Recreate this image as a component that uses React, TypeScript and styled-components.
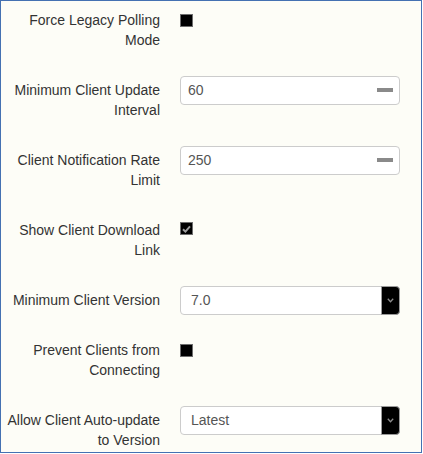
import { createGlobalStyle, styled } from "styled-components";

const GlobalStyle = createGlobalStyle`
    html, body {
        margin: 0;
        padding: 0;
        background: #ffffff;
    }
    body {
        font-family: "Liberation Sans", Arial, sans-serif;
    }
`;

const Frame = styled.div`
    box-sizing: border-box;
    width: 422px;
    height: 453px;
    border: 1px solid #4471b2;
    background: #fdfdf7;
    padding: 9px 0 2px 4px;
    display: flex;
    flex-direction: column;
    gap: 30px;
    overflow: hidden;
`;

const Row = styled.div`
    display: flex;
    align-items: flex-start;
    gap: 20px;
`;

const Label = styled.label`
    width: 155px;
    flex-shrink: 0;
    text-align: right;
    font-size: 14px;
    line-height: 20px;
    color: #333333;
`;

const Control = styled.div`
    height: 20px;
    display: flex;
    align-items: center;
`;

const Check = styled.span<{ $checked?: boolean }>`
    box-sizing: border-box;
    width: 13px;
    height: 13px;
    background: #000000;
    border: 1px solid #6e6e6e;
    display: flex;
    align-items: center;
    justify-content: center;
    margin-top: ${(p) => (p.$checked ? "-3px" : "0")};
`;

const Box = styled.div`
    box-sizing: border-box;
    width: 220px;
    height: 29px;
    border: 1px solid #cccccc;
    border-radius: 4px;
    background: #ffffff;
    display: flex;
    align-items: center;
    font-size: 14px;
    color: #555555;
`;

const Value = styled.span<{ $indent: number }>`
    flex: 1;
    padding-left: ${(p) => p.$indent}px;
`;

const Dash = styled.span`
    width: 16px;
    height: 4px;
    background: #8a8a8a;
    margin-right: 6px;
`;

const Caret = styled.span`
    align-self: stretch;
    width: 17px;
    margin: -1px -1px -1px 0;
    background: #000000;
    border: 1px solid #9a9a9a;
    border-radius: 0 4px 4px 0;
    display: flex;
    align-items: center;
    justify-content: center;
`;

function Checkbox({ checked }: { checked?: boolean }) {
    return (
        <Check $checked={checked}>
            {checked && (
                <svg width="9" height="8" viewBox="0 0 9 8">
                    <path d="M1 4.2 L3.4 6.6 L8 1.4" fill="none" stroke="#9c9c9c" strokeWidth="2" />
                </svg>
            )}
        </Check>
    );
}

function NumberBox({ value }: { value: string }) {
    return (
        <Box>
            <Value $indent={7}>{value}</Value>
            <Dash />
        </Box>
    );
}

function SelectBox({ value }: { value: string }) {
    return (
        <Box>
            <Value $indent={10}>{value}</Value>
            <Caret>
                <svg width="7" height="5" viewBox="0 0 7 5">
                    <path d="M0.8 0.8 L3.5 3.8 L6.2 0.8" fill="none" stroke="#8c8c8c" strokeWidth="1.3" />
                </svg>
            </Caret>
        </Box>
    );
}

export default function App() {
    return (
        <>
            <GlobalStyle />
            <Frame>
                <Row>
                    <Label>Force Legacy Polling Mode</Label>
                    <Control><Checkbox /></Control>
                </Row>
                <Row>
                    <Label>Minimum Client Update Interval</Label>
                    <Control><NumberBox value="60" /></Control>
                </Row>
                <Row>
                    <Label>Client Notification Rate Limit</Label>
                    <Control><NumberBox value="250" /></Control>
                </Row>
                <Row>
                    <Label>Show Client Download Link</Label>
                    <Control><Checkbox checked /></Control>
                </Row>
                <Row>
                    <Label>Minimum Client Version</Label>
                    <Control><SelectBox value="7.0" /></Control>
                </Row>
                <Row>
                    <Label>Prevent Clients from Connecting</Label>
                    <Control><Checkbox /></Control>
                </Row>
                <Row>
                    <Label>Allow Client Auto-update to Version</Label>
                    <Control><SelectBox value="Latest" /></Control>
                </Row>
            </Frame>
        </>
    );
}
